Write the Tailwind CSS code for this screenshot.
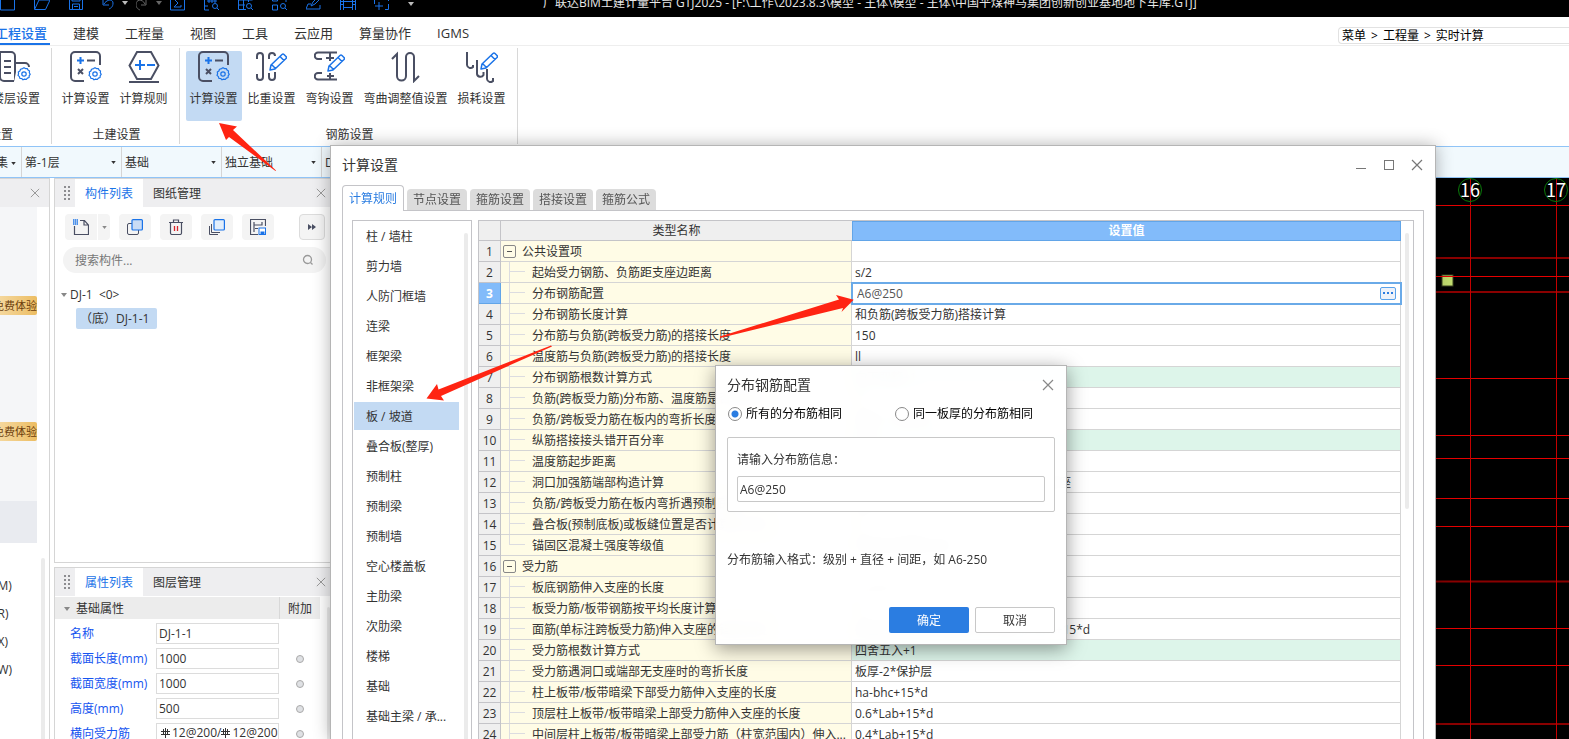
<!DOCTYPE html>
<html lang="zh-CN">
<head>
<meta charset="utf-8">
<title>广联达BIM土建计量平台 GTJ2025</title>
<script src="https://cdn.jsdelivr.net/npm/@tailwindcss/browser@4"></script>
</head>
<body class="relative flex h-screen flex-col overflow-hidden bg-white font-['Open_Sans','Noto_Sans_CJK_SC',sans-serif] text-xs text-[#333]">

<!-- shared icon shapes -->
<svg class="hidden" aria-hidden="true">
  <symbol id="gear" viewBox="0 0 14 14"><g fill="none" stroke="#1a73e8" stroke-width="1.2" stroke-linejoin="round"><path d="M5.6 1.6 7 .7l1.4.9 1.9-.1.7 1.6 1.5 1-.2 1.7.9 1.5-1 1.4-.1 1.8-1.7.6-1.1 1.4-1.6-.4-1.7.7-1.3-1.3-1.8-.2-.5-1.7L1 8.4l.6-1.6L1.300 5l1.600-1 .6-1.700z"/><circle cx="7" cy="7" r="2.200"/></g></symbol>
  <symbol id="calc" viewBox="0 0 32 32"><path d="M14 30H5a4 4 0 0 1-4-4V5a4 4 0 0 1 4-4h21a4 4 0 0 1 4 4v9" fill="none" stroke="#4a4f63" stroke-width="2"/><path d="M7 9.500h7M10.500 6v7" stroke="#1a73e8" stroke-width="2"/><path d="M17 9.500h8M8 18l5 5M13 18l-5 5" stroke="#4a4f63" stroke-width="2"/><use href="#gear" x="18" y="16" width="14" height="14"/></symbol>
  <symbol id="pen" viewBox="0 0 18 18"><path d="M1 17l1-5L13 1.500a1.500 1.500 0 0 1 2 0l2 2a1.500 1.500 0 0 1 0 2L6 16zM11 3.500l4 4M2.500 11.500l4 4" fill="none" stroke="#1a73e8" stroke-width="1.500" stroke-linejoin="round"/></symbol>
  <symbol id="x" viewBox="0 0 12 12"><path d="M1 1l10 10M11 1 1 11" fill="none" stroke="currentColor" stroke-width="1.200"/></symbol>
  <symbol id="dots" viewBox="0 0 8 16"><path d="M1 2h2M1 6h2M1 10h2M1 14h2M5 2h2M5 6h2M5 10h2M5 14h2" stroke="#8c8c90" stroke-width="2"/></symbol>
  <symbol id="caret" viewBox="0 0 6 4"><path d="M0 0h6L3 4z" fill="currentColor"/></symbol>
  <symbol id="rebar" viewBox="0 0 9 10"><path d="M0 3.500h9M0 6.500h9M2.500 1v6M4.500 0v10M6.500 1v6" fill="none" stroke="currentColor"/></symbol>
</svg>

<!-- title bar -->
<header class="flex h-[17px] shrink-0 items-end overflow-hidden bg-black text-[#1a73e8]">
  <div class="flex shrink-0 pb-1.5">
    <button aria-label="新建" class="w-[34px]"><svg class="h-4 w-4" viewBox="0 0 16 16" fill="none" stroke="currentColor"><path d="M.5 1v14h14V1z"/></svg></button>
    <button aria-label="打开" class="w-[34px]"><svg class="h-4 w-4" viewBox="0 0 16 16" fill="none" stroke="currentColor"><path d="M.5 14.500 5 5h11l-4.500 9.500zM.5 14V2H12v3"/></svg></button>
    <button aria-label="保存" class="w-[34px]"><svg class="h-4 w-4" viewBox="0 0 16 16" fill="none" stroke="currentColor"><path d="M1.500 1v13.500h13V1zM4.500 14V9h7v5M6 11.500h4M4 2v4h8V2"/></svg></button>
    <button aria-label="撤销" class="flex w-[34px] items-center gap-1"><svg class="h-4 w-4 shrink-0" viewBox="0 0 16 16" fill="none" stroke="currentColor"><path d="M1 4v6h6M2 9c3-5 9-5 9-1s-2 5-4 6"/></svg><svg class="h-1 w-1.5 text-[#bbb]"><use href="#caret"/></svg></button>
    <button aria-label="重做" class="flex w-[34px] items-center gap-1 text-[#666]"><svg class="h-4 w-4 shrink-0" viewBox="0 0 16 16" fill="none" stroke="currentColor"><path d="M10 4v6H5M9 9C6 3 0 5 0 9s2 5 4 6"/></svg><svg class="h-1 w-1.5"><use href="#caret"/></svg></button>
    <button aria-label="汇总" class="w-[34px]"><svg class="h-4 w-4" viewBox="0 0 16 16" fill="none" stroke="currentColor"><path d="M.5 1v14h14V1M11 4H4l4 4-4 4h7v-2"/></svg></button>
    <button aria-label="查看报表" class="w-[34px]"><svg class="h-4 w-4" viewBox="0 0 16 16" fill="none" stroke="currentColor"><path d="M.5 1v14H5M.5 11H4M3 6h10M3 3h10M5 3v5M8 3v5M11 3v5"/><circle cx="11" cy="11" r="2.500"/><path d="m13 13 2 2"/></svg></button>
    <button aria-label="查看工程量" class="w-[34px]"><svg class="h-4 w-4" viewBox="0 0 16 16" fill="none" stroke="currentColor"><path d="M.5 1v13.500H8M.5 5h14V1M.5 10H7M5.500 1v13M10.500 1v6"/><circle cx="11" cy="11" r="2.500"/><path d="m13 13 2 2"/></svg></button>
    <button aria-label="查看计算式" class="w-[34px]"><svg class="h-4 w-4" viewBox="0 0 16 16" fill="none" stroke="currentColor"><path d="M.5 2v4h5V2M.5 10v5h5v-5zM9 3h5v4"/><circle cx="11" cy="11" r="2.500"/><path d="m13 13 2 2"/></svg></button>
    <button aria-label="编辑" class="w-[34px]"><svg class="h-4 w-4" viewBox="0 0 16 16" fill="none" stroke="currentColor"><path d="M5 11l2-4 6-6M5 11l4-2 6-6M5 9H2l-2 5h14v-4"/></svg></button>
    <button aria-label="三维" class="w-[34px]"><svg class="h-4 w-4" viewBox="0 0 16 16" fill="none" stroke="currentColor"><path d="M.5 1v14M3.500 1v14M12.500 1v14M15.500 1v14M0 6.500h16M3 12.500h10M0 9.500h3M13 9.500h3"/></svg></button>
    <button aria-label="选择" class="w-[34px]"><svg class="h-4 w-4" viewBox="0 0 16 16" fill="none" stroke="currentColor"><path d="M.5 4v5M5 7v8M1 11h8M7 3h7.500v3M14.500 9v5.500H11"/></svg></button>
    <button aria-label="更多" class="w-1.5 text-[#bbb]"><svg class="h-2 w-1.5" viewBox="0 0 6 8" fill="currentColor"><path d="M0 0h6v1H0zM0 3h6L3 7z"/></svg></button>
  </div>
  <h1 class="mb-1.5 ml-[129px] text-xs leading-4 whitespace-nowrap text-[#e8e8e8]">广联达BIM土建计量平台 GTJ2025 - [F:\工作\2023.8.3\模型 - 主体\模型 - 主体\中国平煤神马集团创新创业基地地下车库.GTJ]</h1>
</header>

<!-- menu tabs -->
<div class="flex h-[29px] shrink-0 items-stretch justify-between border-b border-[#eee]">
  <nav class="-ml-[5px] flex gap-[26px] text-[13px] whitespace-nowrap">
    <a href="#" class="-mr-[3px] flex items-center border-b-2 border-[#1a73e8] pt-2 pr-[3px] font-medium text-[#1a73e8]">工程设置</a>
    <a href="#" class="flex items-center pt-1.5">建模</a>
    <a href="#" class="flex items-center pt-1.5">工程量</a>
    <a href="#" class="flex items-center pt-1.5">视图</a>
    <a href="#" class="flex items-center pt-1.5">工具</a>
    <a href="#" class="flex items-center pt-1.5">云应用</a>
    <a href="#" class="flex items-center pt-1.5">算量协作</a>
    <a href="#" class="flex items-center pt-1.5">IGMS</a>
  </nav>
  <div class="mt-2.5 flex h-[17px] w-[231px] items-center gap-[5px] rounded-l-sm border border-r-0 border-[#e2e2e2] pl-[3px] text-black">
    <a href="#">菜单</a><span>&gt;</span><a href="#">工程量</a><span>&gt;</span><a href="#">实时计算</a>
  </div>
</div>

<!-- ribbon -->
<section class="flex h-[100px] shrink-0 py-0.5 whitespace-nowrap">
  <div class="flex w-[52px] flex-col items-end justify-between border-r border-[#d8d8d8] pt-[3px] pb-px">
    <button class="mr-[7px] flex w-14 flex-col items-center"><svg class="h-8 w-8" viewBox="0 0 32 32"><path d="M14 30H4a4 4 0 0 1-4-4V1h11a4 4 0 0 1 4 4v25M15 12h10a4 4 0 0 1 4 4M4 10h7M4 16h7M4 22h7" fill="none" stroke="#4a4f63" stroke-width="2"/><path d="M17 16h15v15H14z" fill="#fff"/><use href="#gear" x="17" y="16" width="14" height="14"/></svg><span class="mt-2 leading-4">楼层设置</span></button>
    <span class="mr-[38px] leading-4">工程设置</span>
  </div>
  <div class="flex w-[128px] flex-col items-center justify-between border-r border-[#d8d8d8] pt-[3px] pr-0.5 pb-px">
    <div class="flex gap-0.5">
      <button class="flex w-14 flex-col items-center"><svg class="h-8 w-8"><use href="#calc"/></svg><span class="mt-2 leading-4">计算设置</span></button>
      <button class="flex w-14 flex-col items-center"><svg class="h-8 w-8" viewBox="0 0 32 32" fill="none" stroke-width="2"><path d="M9 1h14l7.500 13.500L23 28H9L1.500 14.500zM1 31h30" stroke="#4a4f63"/><path d="M7 14h10M12 9v10M19 14h8" stroke="#1a73e8"/></svg><span class="mt-2 leading-4">计算规则</span></button>
    </div>
    <span class="ml-1 leading-4">土建设置</span>
  </div>
  <div class="flex w-[338px] flex-col items-center justify-between border-r border-[#d8d8d8] pt-[3px] pr-0.5 pb-px">
    <div class="flex gap-0.5">
      <button class="flex h-[70px] w-14 flex-col items-center rounded-xs bg-[#c3daf3]"><svg class="h-8 w-8"><use href="#calc"/></svg><span class="mt-2 leading-4">计算设置</span></button>
      <button class="flex w-14 flex-col items-center"><svg class="h-8 w-8" viewBox="0 0 32 32" fill="none"><path d="M1 8V5a3 3 0 0 1 6 0v21a3 3 0 0 1-6 0v-3M13 8V5a3 3 0 0 1 6 0M13 22v4a3 3 0 0 0 6 0v-5" stroke="#4a4f63" stroke-width="2"/><use href="#pen" x="13" y="2" width="18" height="18"/></svg><span class="mt-2 leading-4">比重设置</span></button>
      <button class="flex w-14 flex-col items-center"><svg class="h-8 w-8" viewBox="0 0 32 32" fill="none"><path d="M8 8H4a3 3 0 0 1 0-6.500h19M8 22H4a3 3 0 0 0 0 6.500h19M12 7h8M16 2v8M13 25h7M16 22v6" stroke="#4a4f63" stroke-width="2"/><use href="#pen" x="13" y="3" width="18" height="18"/></svg><span class="mt-2 leading-4">弯钩设置</span></button>
      <button class="flex w-[92px] flex-col items-center"><svg class="h-8 w-8" viewBox="0 0 32 32" fill="none" stroke="#4a4f63" stroke-width="2"><path d="M2 8l5-5v22a4.500 4.500 0 0 0 9 0V6a4 4 0 0 1 8 0v24l5-5"/></svg><span class="mt-2 leading-4">弯曲调整值设置</span></button>
      <button class="flex w-14 flex-col items-center"><svg class="h-8 w-8" viewBox="0 0 32 32" fill="none"><path d="M1 1v13a3.500 3.500 0 0 0 6 2v-2M11 9v14a3.500 3.500 0 0 0 6.500 1v-3M21 18v10a3.500 3.500 0 0 0 6 2v-3" stroke="#4a4f63" stroke-width="2"/><use href="#pen" x="14" y="1" width="18" height="18"/></svg><span class="mt-2 leading-4">损耗设置</span></button>
    </div>
    <span class="ml-1 leading-4">钢筋设置</span>
  </div>
</section>

<!-- context selectors -->
<div class="flex h-8 shrink-0 border-y border-[#90c4f7] bg-[#f1f9fd]">
  <label class="flex w-[22px] items-center justify-end gap-[3px] border-r border-[#d5d5d5] pt-0.5 pr-[5px]"><span>集</span><svg class="h-[3px] w-[5px] shrink-0"><use href="#caret"/></svg></label>
  <label class="relative w-[100px] border-r border-[#d5d5d5]"><select aria-label="楼层" class="h-full w-full appearance-none pt-0.5 pl-[3px]"><option>第-1层</option></select><svg class="absolute top-3.5 right-[5px] h-[3px] w-[5px]"><use href="#caret"/></svg></label>
  <label class="relative w-[100px] border-r border-[#d5d5d5]"><select aria-label="构件分类" class="h-full w-full appearance-none pt-0.5 pl-[3px]"><option>基础</option></select><svg class="absolute top-3.5 right-[5px] h-[3px] w-[5px]"><use href="#caret"/></svg></label>
  <label class="relative w-[100px] border-r border-[#d5d5d5]"><select aria-label="构件类型" class="h-full w-full appearance-none pt-0.5 pl-[3px]"><option>独立基础</option></select><svg class="absolute top-3.5 right-[5px] h-[3px] w-[5px]"><use href="#caret"/></svg></label>
  <label class="relative w-[100px]"><select aria-label="构件" class="h-full w-full appearance-none pt-0.5 pl-[3px]"><option>DJ-1</option></select></label>
</div>

<!-- workspace -->
<main class="flex min-h-0 flex-1">
  <!-- navigation strip -->
  <aside class="flex w-[50px] shrink-0 flex-col overflow-hidden border-t border-r border-[#d5d5d5] whitespace-nowrap">
    <div class="flex h-7 shrink-0 items-center justify-end bg-[#eeeef0] pr-[9px] text-[#999]"><button aria-label="关闭导航"><svg class="h-2.5 w-2.5"><use href="#x"/></svg></button></div>
    <div class="flex h-[294px] w-[37px] shrink-0 flex-col items-end bg-[#f5f6f8] text-[11px]">
      <span class="mt-[89px] h-[19px] rounded-r-xs bg-linear-to-r from-[#f6dca6] to-[#ecbd62] leading-5 text-[#6b3d0c]">免费体验</span>
      <span class="mt-[107px] h-[19px] rounded-r-xs bg-linear-to-r from-[#f6dca6] to-[#ecbd62] leading-5 text-[#6b3d0c]">免费体验</span>
    </div>
    <div class="h-[42px] w-[37px] shrink-0 bg-[#e9ebf0]"></div>
    <div class="flex flex-1 justify-between pt-[15px] pr-1">
      <ul class="-ml-1.5 pt-3.5 leading-7"><li>(M)</li><li>(R)</li><li>(X)</li><li>(W)</li></ul>
      <div class="w-1 rounded-t-full bg-[#ebebeb]"></div>
    </div>
  </aside>

  <!-- panels -->
  <div class="ml-1 flex w-[276px] shrink-0 flex-col gap-1">
    <section class="flex h-[385px] shrink-0 flex-col border border-r-0 border-[#d5d5d5]">
      <div class="flex h-7 shrink-0 items-stretch bg-[#eeeef0] pr-1">
        <svg class="mx-2 my-1.5 h-4 w-2"><use href="#dots"/></svg>
        <button class="-ml-1 w-[68px] bg-white pt-0.5 text-[#1a73e8]">构件列表</button>
        <button class="w-[68px] pt-0.5">图纸管理</button>
        <button aria-label="关闭构件列表" class="ml-auto text-[#999]"><svg class="h-2.5 w-2.5"><use href="#x"/></svg></button>
      </div>
      <div class="mt-[7px] flex h-[26px] items-stretch gap-[9px] pr-[5px] pl-2.5">
        <div class="flex gap-px"><button aria-label="新建构件" class="grid w-8 place-items-center rounded-l-sm bg-[#f4f4f4]"><svg class="h-4 w-4" viewBox="0 0 16 16" fill="none"><path d="M1.500 7v8.500h14V6l-4-4.500H7M11 2v4h4" stroke="#4a4f63" stroke-width="1.200"/><path d="M0 1h5M0 3h5M0 5h5" stroke="#1a73e8" stroke-width="1.500" stroke-dasharray="1.500 .5"/></svg></button><button aria-label="新建选项" class="grid w-3 place-items-center rounded-r-sm bg-[#f4f4f4] text-[#888]"><svg class="h-[3px] w-[5px]"><use href="#caret"/></svg></button></div>
        <button aria-label="复制" class="grid w-8 place-items-center rounded-sm bg-[#f4f4f4]"><svg class="h-4 w-4" viewBox="0 0 16 16" fill="none"><path d="M5 4.500H2a1.500 1.500 0 0 0-1.500 1.500v8A1.500 1.500 0 0 0 2 15.500h8a1.500 1.500 0 0 0 1.500-1.500v-3" stroke="#4a4f63"/><rect x="5" y=".6" width="10.400" height="10.400" rx="1" fill="#c9dcf5" stroke="#1a73e8" stroke-width="1.200"/></svg></button>
        <button aria-label="删除" class="grid w-8 place-items-center rounded-sm bg-[#f4f4f4]"><svg class="h-4 w-4" viewBox="0 0 16 16" fill="none"><path d="M1 3.500h14M5.500 3V1h5v2M2.500 4v10a1.500 1.500 0 0 0 1.500 1.500h8a1.500 1.500 0 0 0 1.500-1.500V4" stroke="#4a4f63" stroke-width="1.200"/><path d="M6.500 7v5M9.500 7v5" stroke="#d9252b" stroke-width="1.300"/></svg></button>
        <button aria-label="层间复制" class="grid w-8 place-items-center rounded-sm bg-[#f4f4f4]"><svg class="h-4 w-4" viewBox="0 0 16 16" fill="none"><path d="M2.500 5v8.500H11M.5 7v8.500H9" stroke="#4a4f63"/><rect x="5" y=".6" width="10.400" height="10.400" rx="1" fill="#e2eefb" stroke="#1a73e8" stroke-width="1.200"/></svg></button>
        <button aria-label="存档" class="grid w-8 place-items-center rounded-sm bg-[#f4f4f4]"><svg class="h-4 w-4" viewBox="0 0 16 16" fill="none"><path d="M8 15.500H.5V.5h15V7M4 3v10M4 6h8V3M5 9.500h3" stroke="#4a4f63" stroke-width="1.200"/><rect x="9" y="9" width="6.500" height="6.500" fill="#fff" stroke="#1a73e8"/><path d="M10.500 12.500h4v3h-4z" fill="#1a73e8"/></svg></button>
        <button aria-label="更多" class="ml-auto grid w-[26px] place-items-center rounded-sm border border-[#dcdcdc] bg-[#f4f4f4] text-[#4a4f63]"><svg class="h-1.5 w-2" viewBox="0 0 8 6" fill="currentColor"><path d="M0 0l4 3-4 3zM4 0l4 3-4 3z"/></svg></button>
      </div>
      <label class="mt-[7px] mr-1 ml-2 flex h-[26px] items-center rounded-full bg-[#f3f3f3] px-3"><input aria-label="搜索构件" placeholder="搜索构件..." class="min-w-0 flex-1 bg-transparent pt-0.5 outline-none placeholder:text-[#777]"><svg class="h-3 w-3" viewBox="0 0 12 12" fill="none" stroke="#999" stroke-width="1.300"><circle cx="5.500" cy="5.500" r="4"/><path d="m8.500 8.500 2 2"/></svg></label>
      <ul class="mt-3 pl-[6px]">
        <li class="flex h-5 items-center gap-[3px]"><svg class="h-1 w-1.5 text-[#888]"><use href="#caret"/></svg><span class="whitespace-pre">DJ-1  &lt;0&gt;</span></li>
        <li class="mt-[3px] ml-[15px] h-[21px] w-[81px] rounded-xs bg-[#c3daf3] pl-1 leading-[21px] whitespace-nowrap">（底）DJ-1-1</li>
      </ul>
    </section>

    <section class="flex min-h-0 flex-1 flex-col overflow-hidden border border-r-0 border-b-0 border-[#d5d5d5]">
      <div class="flex h-7 shrink-0 items-stretch bg-[#eeeef0] pr-1">
        <svg class="mx-2 my-1.5 h-4 w-2"><use href="#dots"/></svg>
        <button class="-ml-1 w-[68px] bg-white pt-0.5 text-[#1a73e8]">属性列表</button>
        <button class="w-[68px] pt-0.5">图层管理</button>
        <button aria-label="关闭属性列表" class="ml-auto text-[#999]"><svg class="h-2.5 w-2.5"><use href="#x"/></svg></button>
      </div>
      <div class="mt-px flex min-h-0 flex-1">
        <table class="w-[265px] table-fixed border-separate border-spacing-0 self-start text-left whitespace-nowrap">
          <colgroup><col class="w-[101px]"><col><col class="w-10"></colgroup>
          <thead><tr class="h-[22px] bg-[#ececec]"><th colspan="2" class="border-r border-[#d8d8d8] p-0 font-normal"><span class="flex items-center gap-1.5 pt-0.5 pl-[9px]"><svg class="h-1 w-1.5 text-[#888]"><use href="#caret"/></svg>基础属性</span></th><th class="p-0 pt-0.5 text-center font-normal">附加</th></tr></thead>
          <tbody id="props"></tbody>
        </table>
        <div class="mt-2.5 ml-[7px] flex-1 rounded-t-full bg-[#ebebeb]"></div>
      </div>
    </section>
  </div>

  <!-- drawing canvas -->
  <div class="flex min-w-0 flex-1 justify-end overflow-hidden bg-black">
    <svg class="h-[561px] w-[134px] shrink-0" viewBox="1435 178 134 561" fill="none" aria-label="轴网">
      <g stroke="#e60000"><path d="M1435 205.500h134M1435 276.500h134M1435 458.500h134M1435 526.500h134M1435 665.500h134M1435 378.500h134M1435 435.500h134M1435 498.500h134M1435 628.500h134"/></g>
      <path d="M1435 258h134M1435 292h134M1435 581.500h134M1435 724h134" stroke="#8a0000" stroke-width="2"/>
      <path d="M1470.500 178v561M1556.500 178v561" stroke="#c40000"/>
      <rect x="1442" y="275" width="11" height="11" fill="#c3de70" stroke="#3a4420"/>
      <path d="M1435 276.500h134" stroke="#e60000"/>
      <g stroke="#0a7a0a"><circle cx="1470" cy="190" r="11.500"/><circle cx="1556" cy="190" r="11.500"/></g>
      <g fill="#fff" font-size="18" text-anchor="middle" font-family="Noto Sans CJK SC"><text x="1470" y="197">16</text><text x="1556" y="197">17</text></g>
    </svg>
  </div>
</main>

<!-- calculation settings window -->
<section role="dialog" aria-label="计算设置" class="absolute top-[145px] right-[133px] bottom-0 left-[330px] flex flex-col border border-b-0 border-[#b5b5b5] bg-white shadow-[0_0_16px_rgba(0,0,0,0.3)]">
  <div class="flex h-[38px] shrink-0 items-center justify-between pr-3 pl-[11px]">
    <h2 class="text-sm">计算设置</h2>
    <div class="flex items-center gap-4 text-[#777]">
      <button aria-label="最小化"><svg class="h-3 w-3" viewBox="0 0 12 12"><path d="M1 9.500h10" stroke="currentColor"/></svg></button>
      <button aria-label="最大化"><svg class="h-3 w-3" viewBox="0 0 12 12"><rect x="1.500" y="1.500" width="9" height="9" fill="none" stroke="currentColor"/></svg></button>
      <button aria-label="关闭"><svg class="h-3 w-3"><use href="#x"/></svg></button>
    </div>
  </div>
  <div class="z-10 flex h-[26px] shrink-0 items-end gap-[3px] pl-[11px]">
    <button class="-mb-px h-[26px] w-[62px] rounded-t-sm border border-b-0 border-[#c4c4c8] bg-white text-[#2b7de1]">计算规则</button>
    <button class="h-[21px] w-[60px] rounded-t-sm bg-[#dcdcdc] text-[#555]">节点设置</button>
    <button class="h-[21px] w-[60px] rounded-t-sm bg-[#dcdcdc] text-[#555]">箍筋设置</button>
    <button class="h-[21px] w-[60px] rounded-t-sm bg-[#dcdcdc] text-[#555]">搭接设置</button>
    <button class="h-[21px] w-[60px] rounded-t-sm bg-[#dcdcdc] text-[#555]">箍筋公式</button>
  </div>
  <div class="mr-[11px] ml-[11px] flex min-h-0 flex-1 gap-1.5 border border-b-0 border-[#c4c4c8] pt-[9px] pr-[9px] pl-[9px]">
    <div class="flex w-[120px] shrink-0 overflow-hidden border border-b-0 border-[#c4c4c8]">
      <ul id="kinds" class="ml-px w-[105px] shrink-0"></ul>
      <div class="mt-3 ml-[5px] w-1 rounded-t-full bg-[#ebebeb]"></div>
    </div>
    <div class="flex min-w-0 flex-1 overflow-hidden border border-b-0 border-[#c4c4c8]">
      <table class="min-w-0 flex-1 table-fixed border-separate border-spacing-0 self-start text-left whitespace-nowrap">
        <colgroup><col class="w-[22px]"><col class="w-[351px]"><col></colgroup>
        <thead><tr class="h-5 bg-[#efefef]"><th class="border-r border-b border-[#c4c4c8] p-0"></th><th class="border-b border-[#c4c4c8] p-0 text-center leading-[19px] font-normal">类型名称</th><th class="border border-[#62a5e8] bg-[#82bbfa] p-0 text-center leading-[18px] font-bold text-white">设置值</th></tr></thead>
        <tbody id="rules"></tbody>
      </table>
      <div class="mt-3 mr-1 ml-1 h-[276px] w-1 shrink-0 rounded-full bg-[#ebebeb]"></div>
    </div>
  </div>
</section>

<!-- distribution bar prompt -->
<form role="dialog" aria-label="分布钢筋配置" class="absolute top-[365px] left-[715px] flex w-[352px] flex-col border border-[#b5b5b5] bg-white/97 px-[11px] pb-[11px] shadow-[0_4px_18px_rgba(0,0,0,0.4)] backdrop-blur-sm">
  <div class="flex h-[37px] items-center justify-between pr-px"><h2 class="text-sm">分布钢筋配置</h2><button type="button" aria-label="关闭" class="text-[#888]"><svg class="h-3 w-3"><use href="#x"/></svg></button></div>
  <div class="flex h-[22px] items-center pl-px text-black">
    <label class="flex w-[167px] items-center gap-1"><input type="radio" name="mode" checked class="h-3.5 w-3.5 appearance-none rounded-full border border-[#888] bg-white bg-[radial-gradient(circle,#2b7de1_3px,transparent_4px)]">所有的分布筋相同</label>
    <label class="flex items-center gap-1"><input type="radio" name="mode" class="h-3.5 w-3.5 appearance-none rounded-full border border-[#888] bg-white">同一板厚的分布筋相同</label>
  </div>
  <div class="mt-3 flex h-[75px] flex-col rounded-xs border border-[#c8c8c8] bg-white px-[9px] pt-3">
    <label for="bar" class="leading-5">请输入分布筋信息：</label>
    <input id="bar" value="A6@250" class="mt-1.5 h-[26px] rounded-xs border border-[#c8c8c8] bg-white px-0.5 outline-none">
  </div>
  <p class="mt-[38px] leading-5">分布筋输入格式：级别 + 直径 + 间距，如 A6-250</p>
  <div class="mt-[37px] flex justify-end gap-1.5"><button type="button" class="h-[26px] w-20 rounded-xs bg-[#2b7de1] pt-0.5 text-white">确定</button><button type="button" class="h-[26px] w-20 rounded-xs border border-[#c8c8c8] bg-white pt-0.5">取消</button></div>
</form>

<!-- annotation arrows -->
<svg class="pointer-events-none absolute top-0 left-0 h-[739px] w-[1569px]" viewBox="0 0 1569 739" fill="#ff2412">
  <path d="M219 123l18 3.500-4 3.500 43 40.500-.5.500L229 137l-3 3z"/>
  <path d="M426.500 398.500L437 384l1.500 5.500L551 345.500l1 1L441 396l3 4.500z"/>
  <path d="M853.700 299.700L836 295l3 4.500L720 336.500v1.500l123-30-1.500 4z"/>
</svg>

<script>
const props = [['名称','DJ-1-1'],['截面长度(mm)','1000'],['截面宽度(mm)','1000'],['高度(mm)','500'],['横向受力筋','']];
const rebar = '<svg class="mr-0.5 h-2.5 w-[9px] shrink-0"><use href="#rebar"/></svg>';
document.getElementById('props').innerHTML = props.map(([name, value], i) => `
  <tr><th class="p-0 pt-1 font-normal text-[#1554f0]"><label for="p${i}" class="pl-[15px]">${name}</label></th>
  <td class="p-0 pt-1">${value ? `<input id="p${i}" value="${value}" class="block h-[21px] w-[123px] border border-[#dcdcdc] px-0.5 outline-none">`
    : `<div id="p${i}" role="textbox" aria-label="${name}" contenteditable="true" class="flex h-[21px] w-[123px] items-center overflow-hidden border border-[#dcdcdc] pb-0.5 pl-1">${rebar}12@200/${rebar}12@200</div>`}</td>
  <td class="p-0 pt-1">${i ? '<input type="radio" aria-label="附加" class="mx-auto block h-2 w-2 appearance-none rounded-full border border-[#aaa] bg-[#dfe1e4]">' : ''}</td></tr>`).join('');

const kinds = ['柱 / 墙柱','剪力墙','人防门框墙','连梁','框架梁','非框架梁','板 / 坡道','叠合板(整厚)','预制柱','预制梁','预制墙','空心楼盖板','主肋梁','次肋梁','楼梯','基础','基础主梁 / 承...'];
document.getElementById('kinds').innerHTML = kinds.map((k, i) =>
  `<li class="h-[30px] py-px"><a href="#" class="${i === 6 ? 'flex h-7 items-center bg-[#c3daf3] pt-0.5 pl-3' : 'flex h-7 items-center pt-0.5 pl-3'}">${k}</a></li>`).join('');

const rules = [
  ['公共设置项', ''], ['起始受力钢筋、负筋距支座边距离', 's/2'], ['分布钢筋配置', 'A6@250'], ['分布钢筋长度计算', '和负筋(跨板受力筋)搭接计算'],
  ['分布筋与负筋(跨板受力筋)的搭接长度', '150'], ['温度筋与负筋(跨板受力筋)的搭接长度', 'll'], ['分布钢筋根数计算方式', '向下取整+1'],
  ['负筋(跨板受力筋)分布筋、温度筋是否带弯勾', '否'], ['负筋/跨板受力筋在板内的弯折长度', '板厚-2*保护层'], ['纵筋搭接接头错开百分率', '50%'],
  ['温度筋起步距离', 's'], ['洞口加强筋端部构造计算', '加强筋端部伸入支座内锚固，且伸过支座'], ['负筋/跨板受力筋在板内弯折遇预制底板', '板厚-保护层'],
  ['叠合板(预制底板)或板缝位置是否计算受力筋', '否'], ['锚固区混凝土强度等级值', '取系统设置默认值'], ['受力筋', ''], ['板底钢筋伸入支座的长度', 'max(ha/2,5*d)'],
  ['板受力筋/板带钢筋按平均长度计算', '否'], ['面筋(单标注跨板受力筋)伸入支座的锚固长度', '能直锚就直锚,否则按公式计算:ha-bhc+15*d'],
  ['受力筋根数计算方式', '四舍五入+1'], ['受力筋遇洞口或端部无支座时的弯折长度', '板厚-2*保护层'], ['柱上板带/板带暗梁下部受力筋伸入支座的长度', 'ha-bhc+15*d'],
  ['顶层柱上板带/板带暗梁上部受力筋伸入支座的长度', '0.6*Lab+15*d'], ['中间层柱上板带/板带暗梁上部受力筋（柱宽范围内）伸入...', '0.4*Lab+15*d'],
];
const groups = [1, 16], changed = [7, 10, 20];
document.getElementById('rules').innerHTML = rules.map(([name, value], i) => {
  const n = i + 1;
  const num = n === 3 ? 'border-r border-b border-[#62a5e8] bg-[#82bbfa] p-0 pt-0.5 text-center leading-[18px] font-bold text-white' : 'border-r border-b border-[#c4c4c8] bg-[#efefef] p-0 pt-0.5 text-center leading-[18px] font-normal';
  const tree = groups.includes(n)
    ? `<button aria-label="折叠" class="ml-0.5 grid h-[13px] w-[13px] place-items-center rounded-xs border border-[#888]"><span class="h-px w-[5px] bg-[#555]"></span></button><span class="ml-1.5 pt-0.5 leading-[18px]">${name}</span>`
    : `<span class="ml-2 flex h-full w-4 flex-col"><span class="h-1/2 border-b border-l border-[#dcdce0]"></span><span class="${n === 15 ? 'h-1/2' : 'h-1/2 border-l border-[#dcdce0]'}"></span></span><span class="ml-[7px] pt-0.5 leading-[18px]">${name}</span>`;
  const cell = n === 3
    ? `<td class="border-b border-[#d5d5d5] p-0 outline-2 -outline-offset-1 outline-[#6aaae8]"><div class="flex h-5 items-center pr-[5px] pl-[5px]"><input aria-label="${name}" value="${value}" class="min-w-0 flex-1 pt-0.5 leading-[18px] text-[#555] outline-none"><button aria-label="编辑" class="flex h-[13px] w-4 items-center justify-center gap-0.5 rounded-xs border border-[#5aa2ea] bg-[#eef2f9]"><span class="h-0.5 w-0.5 bg-[#2b7de1]"></span><span class="h-0.5 w-0.5 bg-[#2b7de1]"></span><span class="h-0.5 w-0.5 bg-[#2b7de1]"></span></button></div></td>`
    : `<td class="${changed.includes(n) ? 'border-r border-b border-[#d5d5d5] bg-[#ddf5ea] p-0 pt-0.5 pl-[3px] leading-[18px]' : 'border-r border-b border-[#d5d5d5] p-0 pt-0.5 pl-[3px] leading-[18px]'}">${value}</td>`;
  return `<tr class="h-[21px]"><th class="${num}">${n}</th><td class="border-r border-b border-[#d5d5d5] bg-[#fffce6] p-0"><div class="flex h-5 items-center overflow-hidden">${tree}</div></td>${cell}</tr>`;
}).join('');
</script>
</body>
</html>
